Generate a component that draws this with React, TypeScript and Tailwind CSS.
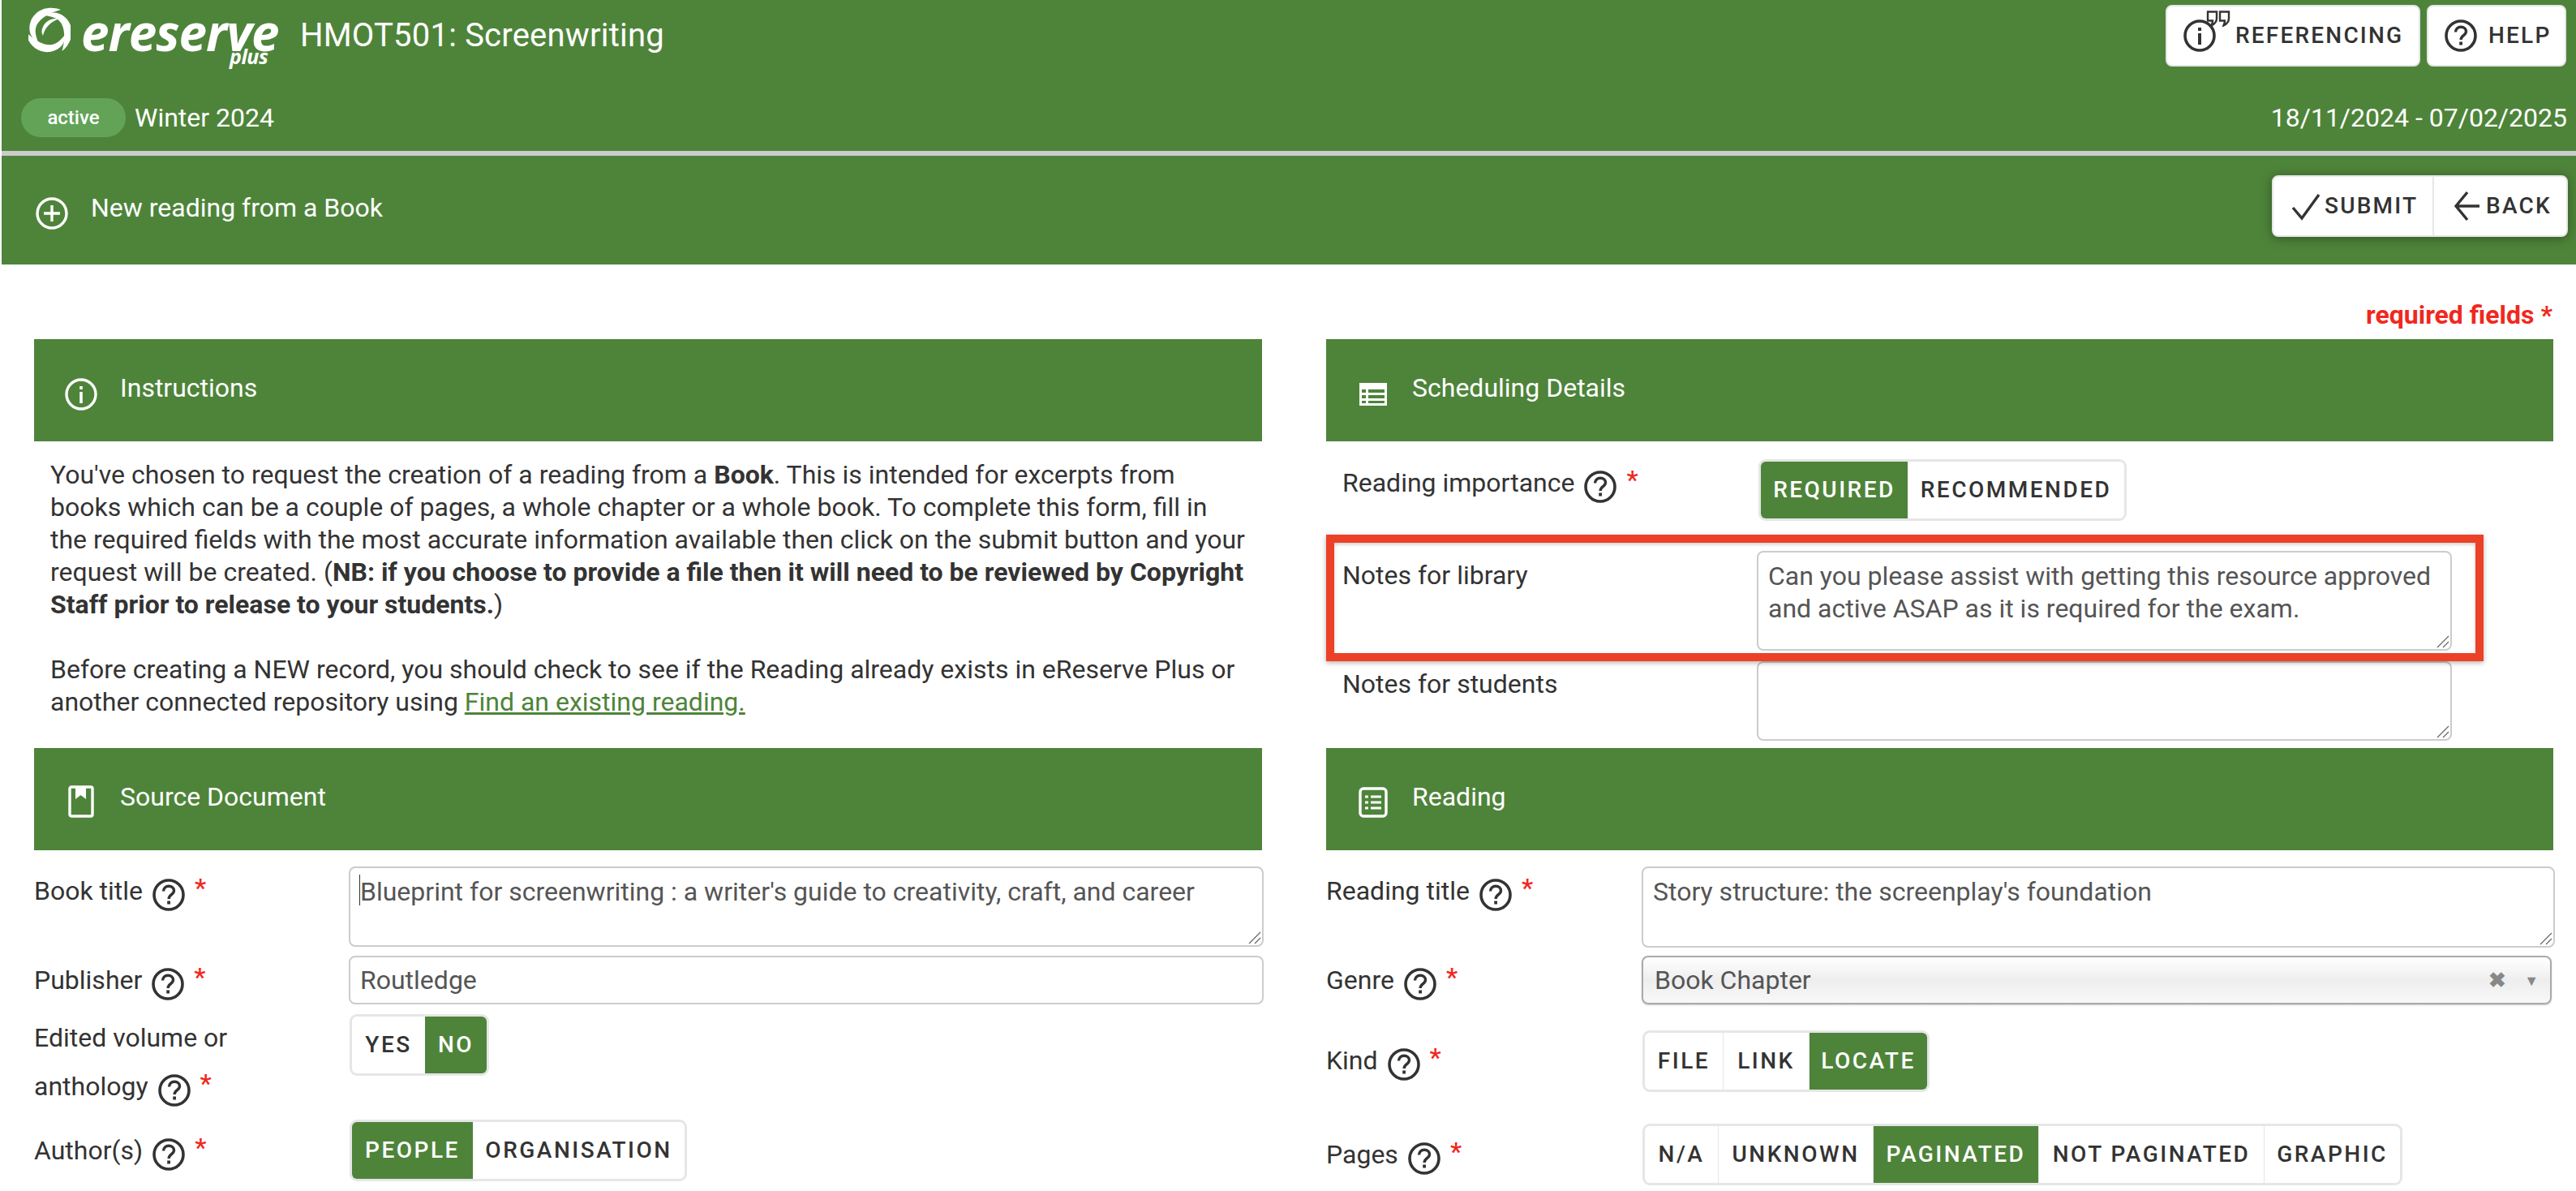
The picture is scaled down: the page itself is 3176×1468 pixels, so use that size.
import React from "react";

const GREEN = "bg-[#4e843a]";

const Q = () => (
  <svg viewBox="0 0 40 40" className="inline-block w-[40px] h-[40px] ml-[12px] align-[-14px]" fill="none" stroke="#333">
    <circle cx="20" cy="20" r="18" strokeWidth="3.6" />
    <path d="M13.5 15.5c0-3.8 2.9-6.3 6.6-6.3 3.6 0 6.4 2.3 6.4 5.6 0 4.8-6.4 5-6.4 10.2" strokeWidth="3.4" />
    <path d="M20.1 27.5v4" strokeWidth="3.8" />
  </svg>
);

const Star = () => <span className="ml-[12px] text-[#f0281e] font-medium leading-none align-[4px]">*</span>;

function Toggle({ items, active, dividers, className }: { items: { t: string; w: number }[]; active: string; dividers?: boolean; className?: string }) {
  return (
    <div className={`inline-flex h-[76px] bg-white border-[3px] border-[#e6e6e6] rounded-[9px] overflow-hidden ${className ?? ""}`}>
      {items.map((it, i) => {
        const on = it.t === active;
        return (
          <div
            key={it.t}
            style={{ width: it.w }}
            className={`flex items-center justify-center text-[28px] font-medium tracking-[2.5px] ${on ? "bg-[#4e843a] text-white" : "text-[#333]"} ${dividers && i > 0 ? "border-l border-[#e6e6e6]" : ""}`}
          >
            {it.t}
          </div>
        );
      })}
    </div>
  );
}

function SectionHead({ icon, title }: { icon: React.ReactNode; title: string }) {
  return (
    <div className={`h-[126px] ${GREEN} text-white flex`}>
      <div className="w-[106px] flex justify-center pt-[48px] pl-[10px]">{icon}</div>
      <div className="text-[32px] leading-[40px] pt-[40px]">{title}</div>
    </div>
  );
}

const Grip = () => (
  <svg viewBox="0 0 16 16" className="absolute right-[3px] bottom-[3px] w-[16px] h-[16px]" fill="none" stroke="#666" strokeWidth="1.2">
    <path d="M15 1L1 15M15 8l-7 7" />
  </svg>
);

const TA = ({ value, h, caret }: { value?: string; h: number; caret?: boolean }) => (
  <div className="relative w-full">
    <textarea
      readOnly
      defaultValue={value}
      style={{ height: h }}
      className="block w-full resize-none bg-white border-2 border-[#cccccc] rounded-[8px] px-[12px] py-[9px] text-[32px] leading-[40px] text-[#555] outline-none font-[Roboto,sans-serif]"
    />
    {caret && <span className="absolute left-[13px] top-[10px] w-[1px] h-[38px] bg-[#333]" />}
    <Grip />
  </div>
);

const Label = ({ w, children, mt }: { w: string; children: React.ReactNode; mt: string }) => (
  <div className={`${w} ${mt} shrink-0 text-[32px] leading-[40px]`}>{children}</div>
);

const BLADE = "M40 4C30 0 18 1 10 8 3 14 0 23 2 32 3 37 7 41 12 44 10 38 8 33 9 27 11 17 22 9 40 4Z";
const INNER = "M38 15C29 14 21 18 18 25 16 29 16 33 18 36 19 31 21 27 25 23 29 19 33 17 38 15Z";

const Logo = () => (
  <div className="relative w-[310px] h-[90px] text-white">
    <svg viewBox="0 0 52 60" className="absolute left-[33px] top-[8px] w-[52px] h-[60px]" fill="#fff">
      <path d={BLADE} />
      <path d={BLADE} transform="rotate(120 26 30)" />
      <path d={BLADE} transform="rotate(240 26 30)" />
      <path d={INNER} />
    </svg>
    <span className="absolute left-[98px] top-[4px] text-[62px] leading-[70px] font-bold italic tracking-[-1px] font-['Open_Sans',sans-serif]">ereserve</span>
    <span className="absolute left-[281px] top-[54px] text-[25px] leading-[30px] font-bold italic tracking-[-0.5px] font-['Open_Sans',sans-serif]">plus</span>
  </div>
);

const WhiteBtn = ({ children, className }: { children: React.ReactNode; className?: string }) => (
  <div className={`h-[76px] bg-white border-[2px] border-[#e6e6e6] rounded-[8px] flex items-center text-[#333] text-[28px] font-medium tracking-[2.2px] ${className ?? ""}`}>
    {children}
  </div>
);

const DarkCircle = ({ kind }: { kind: "i" | "q" }) => (
  <svg viewBox="0 0 40 40" className="w-[40px] h-[40px] shrink-0" fill="none" stroke="#333">
    <circle cx="20" cy="20" r="18" strokeWidth="3.6" />
    {kind === "q" ? (
      <>
        <path d="M13.5 15.5c0-3.8 2.9-6.3 6.6-6.3 3.6 0 6.4 2.3 6.4 5.6 0 4.8-6.4 5-6.4 10.2" strokeWidth="3.4" />
        <path d="M20.1 27.5v4" strokeWidth="3.8" />
      </>
    ) : (
      <>
        <path d="M20 10v4" strokeWidth="4" />
        <path d="M20 17v14" strokeWidth="4" />
      </>
    )}
  </svg>
);

export default function App() {
  return (
    <div className="w-[3176px] h-[1468px] overflow-hidden bg-white text-[#333] font-[Roboto,sans-serif]">
      {/* Top bar */}
      <div className={`ml-[2px] ${GREEN} text-white h-[192px] border-b-[6px] border-[#cccccc] flex flex-col`}>
        <div className="h-[114px] flex justify-between pr-[12px] pt-[6px]">
          <div className="flex items-start -mt-[6px]">
            <Logo />
            <div className="ml-[58px] mt-[20px] text-[40px] leading-[48px] font-normal tracking-[0.2px]">HMOT501: Screenwriting</div>
          </div>
          <div className="flex gap-[8px]">
            <WhiteBtn className="w-[314px] pl-[20px] relative">
              <DarkCircle kind="i" />
              <svg viewBox="0 0 30 20" className="absolute left-[48px] top-[5px] w-[30px] h-[20px]" fill="#fff" stroke="#333" strokeWidth="2.4">
                <path d="M2 1.500h11v8c0 4-2.500 7-6.500 9 1-2.500 1.500-4 1.500-6H2z" />
                <path d="M17 1.500h11v8c0 4-2.500 7-6.500 9 1-2.500 1.500-4 1.500-6H17z" />
              </svg>
              <span className="ml-[24px]">REFERENCING</span>
            </WhiteBtn>
            <WhiteBtn className="w-[172px] pl-[20px]">
              <DarkCircle kind="q" />
              <span className="ml-[14px]">HELP</span>
            </WhiteBtn>
          </div>
        </div>
        <div className="flex items-center justify-between pl-[24px] pr-[11px] mt-[7px]">
          <div className="flex items-center">
            <span className="w-[129px] h-[48px] rounded-full bg-[#62a358] text-[24px] font-medium flex items-center justify-center text-white">active</span>
            <span className="ml-[11px] text-[32px] leading-[40px]">Winter 2024</span>
          </div>
          <span className="text-[32px] leading-[40px]">18/11/2024 - 07/02/2025</span>
        </div>
      </div>

      {/* Sub bar */}
      <div className={`ml-[2px] ${GREEN} text-white h-[134px] flex items-start justify-between pr-[10px]`}>
        <div className="flex items-start pl-[42px]">
          <svg viewBox="0 0 40 40" className="w-[40px] h-[40px] mt-[51px]" fill="none" stroke="#fff" strokeWidth="3.4">
            <circle cx="20" cy="20" r="18" />
            <path d="M20 10v20M10 20h20" />
          </svg>
          <span className="ml-[28px] mt-[44px] text-[32px] leading-[40px]">New reading from a Book</span>
        </div>
        <div className="mt-[24px] h-[76px] bg-white rounded-[8px] border-[2px] border-[#e6e6e6] flex items-center text-[#333] text-[28px] font-medium tracking-[2.2px] shadow-[0_2px_14px_rgba(0,0,0,0.35)]">
          <div className="w-[198px] h-full flex items-center pl-[22px] border-r-2 border-[#e6e6e6]">
            <svg viewBox="0 0 36 36" className="w-[36px] h-[36px]" fill="none" stroke="#333" strokeWidth="3.4">
              <path d="M2 20l11 13L34 4" />
            </svg>
            <span className="ml-[5px]">SUBMIT</span>
          </div>
          <div className="w-[163px] h-full flex items-center pl-[24px]">
            <svg viewBox="0 0 32 40" className="w-[32px] h-[40px]" fill="none" stroke="#333" strokeWidth="3.4">
              <path d="M32 20H3M17 3L3 20l14 17" />
            </svg>
            <span className="ml-[8px]">BACK</span>
          </div>
        </div>
      </div>

      {/* Required note */}
      <div className="h-[92px] pr-[29px] pt-[42px] text-right text-[32px] leading-[40px] font-bold text-[#f0281e]">required fields *</div>

      {/* Panels */}
      <div className="pl-[42px] grid grid-cols-[1514px_1513px] grid-rows-[504px_546px] gap-x-[79px]">
        <section>
          <SectionHead
            title="Instructions"
            icon={
              <svg viewBox="0 0 40 40" className="w-[40px] h-[40px]" fill="none" stroke="#fff">
                <circle cx="20" cy="20" r="18" strokeWidth="3.4" />
                <path d="M20 10v4M20 17v14" strokeWidth="3.6" />
              </svg>
            }
          />
          <div className="ml-[20px] pt-[21px] text-[32px] leading-[40px] w-[1473px]">
            <p>
              You've chosen to request the creation of a reading from a <b>Book</b>. This is intended for excerpts from books which can be a couple of pages, a whole chapter or a whole book. To complete this form, fill in the required fields with the most accurate information available then click on the submit button and your request will be created. (<b>NB: if you choose to provide a file then it will need to be reviewed by Copyright Staff prior to release to your students.</b>)
            </p>
            <p className="mt-[40px]">
              Before creating a NEW record, you should check to see if the Reading already exists in eReserve Plus or another connected repository using <a className="text-[#4e843a] underline">Find an existing reading.</a>
            </p>
          </div>
        </section>

        <section className="relative">
          <SectionHead
            title="Scheduling Details"
            icon={
              <svg viewBox="0 0 34 28" className="w-[34px] h-[28px] mt-[6px]" fill="#fff">
                <path fillRule="evenodd" d="M0 0h34v28H0zM3 8v4h5V8zm8 0v4h20V8zM3 15v4h5v-4zm8 0v4h20v-4zM3 22v3h5v-3zm8 0v3h20v-3z" />
              </svg>
            }
          />
          <div className="pl-[20px] flex mt-[22px] h-[76px]">
            <Label w="w-[511px]" mt="mt-[9px]">Reading importance<Q /><Star /></Label>
            <Toggle className="ml-[2px]" active="REQUIRED" items={[{ t: "REQUIRED", w: 181 }, { t: "RECOMMENDED", w: 267 }]} />
          </div>
          <div className="pl-[20px] flex mt-[37px] w-[1388px]">
            <Label w="w-[511px]" mt="mt-[10px]">Notes for library</Label>
            <TA h={123} value="Can you please assist with getting this resource approved and active ASAP as it is required for the exam." />
          </div>
          <div className="pl-[20px] flex mt-[13px] w-[1388px]">
            <Label w="w-[511px]" mt="mt-[8px]">Notes for students</Label>
            <TA h={98} />
          </div>
          <div className="absolute left-0 top-[241px] w-[1427px] h-[156px] border-[10px] border-[#ec4126] pointer-events-none shadow-[0_2px_6px_rgba(0,0,0,0.3),inset_0_2px_4px_rgba(0,0,0,0.2)]" />
        </section>

        <section>
          <SectionHead
            title="Source Document"
            icon={
              <svg viewBox="0 0 32 40" className="w-[32px] h-[40px] -mt-[2px]" fill="none" stroke="#fff" strokeWidth="3.4">
                <rect x="2" y="2" width="28" height="36" rx="2" />
                <path d="M9 2h13v15l-6.500-5L9 17z" fill="#fff" stroke="none" />
              </svg>
            }
          />
          <div className="flex mt-[20px] w-[1516px]">
            <Label w="w-[388px]" mt="mt-[10px]">Book title<Q /><Star /></Label>
            <TA h={99} caret value="Blueprint for screenwriting : a writer's guide to creativity, craft, and career" />
          </div>
          <div className="flex mt-[11px] w-[1516px]">
            <Label w="w-[388px]" mt="mt-[10px]">Publisher<Q /><Star /></Label>
            <div className="h-[60px] w-full bg-white border-2 border-[#cccccc] rounded-[8px] px-[12px] flex items-center text-[32px] text-[#555]">Routledge</div>
          </div>
          <div className="flex mt-[12px] h-[76px]">
            <div className="w-[389px] shrink-0 text-[32px] leading-[60px] -mt-[1px]">Edited volume or<br />anthology<Q /><Star /></div>
            <Toggle active="NO" items={[{ t: "YES", w: 90 }, { t: "NO", w: 76 }]} />
          </div>
          <div className="flex mt-[54px]">
            <div className="w-[389px] shrink-0 text-[32px] leading-[40px] mt-[18px]">Author(s)<Q /><Star /></div>
            <Toggle active="PEOPLE" items={[{ t: "PEOPLE", w: 149 }, { t: "ORGANISATION", w: 261 }]} />
          </div>
        </section>

        <section>
          <SectionHead
            title="Reading"
            icon={
              <svg viewBox="0 0 36 38" className="w-[36px] h-[38px]" fill="none" stroke="#fff" strokeWidth="3.4">
                <rect x="2" y="2" width="32" height="34" rx="4" />
                <path d="M8 12h4M15 12h13M8 19h4M15 19h13M8 26h4M15 26h13" strokeWidth="3" />
              </svg>
            }
          />
          <div className="flex mt-[20px] w-[1515px]">
            <Label w="w-[389px]" mt="mt-[10px]">Reading title<Q /><Star /></Label>
            <TA h={100} value="Story structure: the screenplay's foundation" />
          </div>
          <div className="flex mt-[10px] w-[1511px]">
            <Label w="w-[389px]" mt="mt-[10px]">Genre<Q /><Star /></Label>
            <div className="h-[60px] w-full rounded-[8px] border-2 border-[#aaaaaa] bg-gradient-to-b from-white via-[#eeeeee] to-[#f8f8f8] pl-[14px] pr-[14px] flex items-center justify-between text-[32px] text-[#555] shadow-[0_1px_2px_rgba(0,0,0,0.2)]">
              <span>Book Chapter</span>
              <span className="flex items-center gap-[22px] text-[#888]">
                <span className="text-[26px] font-bold">✖</span>
                <span className="text-[18px]">▼</span>
              </span>
            </div>
          </div>
          <div className="flex mt-[32px]">
            <Label w="w-[390px]" mt="mt-[17px]">Kind<Q /><Star /></Label>
            <Toggle dividers active="LOCATE" items={[{ t: "FILE", w: 96 }, { t: "LINK", w: 106 }, { t: "LOCATE", w: 146 }]} />
          </div>
          <div className="flex mt-[39px]">
            <Label w="w-[390px]" mt="mt-[18px]">Pages<Q /><Star /></Label>
            <Toggle dividers active="PAGINATED" items={[{ t: "N/A", w: 90 }, { t: "UNKNOWN", w: 191 }, { t: "PAGINATED", w: 204 }, { t: "NOT PAGINATED", w: 278 }, { t: "GRAPHIC", w: 168 }]} />
          </div>
        </section>
      </div>
    </div>
  );
}
